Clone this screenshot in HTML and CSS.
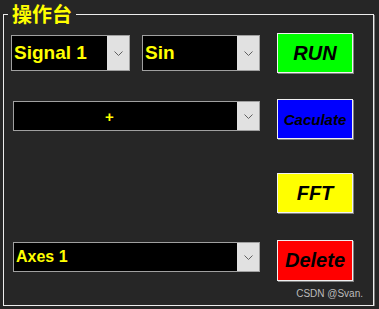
FILE: index.html
```html
<!DOCTYPE html>
<html lang="zh">
<head>
    <meta charset="UTF-8">
    <meta name="viewport" content="width=device-width, initial-scale=1.0">
    <title>操作台</title>
    <link rel="stylesheet" href="styles.css">
</head>
<body>

    <!-- Control panel -->
    <fieldset class="panel">
        <legend class="panel-title">操作台</legend>

        <div class="row row-first">
            <div class="left pair">
                <div class="combo combo-tall signal">
                    <span class="combo-text">Signal 1</span>
                    <span class="combo-arrow"><svg width="9" height="5" viewBox="0 0 9 5"><path d="M0.5 0.5 L4.5 4.5 L8.5 0.5" fill="none" stroke="#606060" stroke-width="1"/></svg></span>
                </div>
                <div class="combo combo-tall wave">
                    <span class="combo-text">Sin</span>
                    <span class="combo-arrow"><svg width="9" height="5" viewBox="0 0 9 5"><path d="M0.5 0.5 L4.5 4.5 L8.5 0.5" fill="none" stroke="#606060" stroke-width="1"/></svg></span>
                </div>
            </div>
            <button class="btn btn-run">RUN</button>
        </div>

        <div class="row row-second">
            <div class="left combo top">
                <span class="combo-text op">+</span>
                <span class="combo-arrow"><svg width="9" height="5" viewBox="0 0 9 5"><path d="M0.5 0.5 L4.5 4.5 L8.5 0.5" fill="none" stroke="#606060" stroke-width="1"/></svg></span>
            </div>
            <button class="btn btn-calc">Caculate</button>
        </div>

        <div class="row row-third">
            <div class="left"></div>
            <button class="btn btn-fft">FFT</button>
        </div>

        <div class="row row-fourth">
            <div class="left combo top">
                <span class="combo-text axes">Axes 1</span>
                <span class="combo-arrow"><svg width="9" height="5" viewBox="0 0 9 5"><path d="M0.5 0.5 L4.5 4.5 L8.5 0.5" fill="none" stroke="#606060" stroke-width="1"/></svg></span>
            </div>
            <button class="btn btn-delete">Delete</button>
        </div>

        <div class="credit">CSDN @Svan.</div>
    </fieldset>

</body>
</html>
```

FILE: styles.css
```css
html {
    background: #262626;
}
body {
    margin: 0;
    padding: 4px 5px 0 3px;
    font-family: "Liberation Sans", Arial, sans-serif;
    background: #262626;
}
.panel {
    box-sizing: border-box;
    height: 302px;
    margin: 0;
    padding: 0;
    border: 1px solid #ececec;
    box-shadow: 1px 1px 0 #7a7a7a;
}
.panel-title {
    margin-left: 4px;
    padding: 0 4px;
    font-family: "Noto Sans CJK SC", sans-serif;
    font-size: 20px;
    line-height: 20px;
    font-weight: 700;
    color: #ffff00;
}
.row {
    display: grid;
    grid-template-columns: 247px 76px;
    column-gap: 17px;
    align-items: center;
    height: 40px;
    padding-left: 9px;
}
.row-first {
    margin-top: 9px;
}
.row-second {
    margin-top: 26px;
}
.row-third {
    margin-top: 34px;
}
.row-fourth {
    margin-top: 27px;
    height: 41px;
}
.pair {
    display: flex;
    gap: 12px;
    margin-left: -2px;
    width: 249px;
}
.combo {
    box-sizing: border-box;
    display: flex;
    height: 30px;
    border: 1px solid #a0a0a0;
    background: #000;
}
.combo.top {
    align-self: start;
    margin-top: 2px;
}
.combo-tall {
    height: 36px;
}
.signal {
    width: 119px;
}
.wave {
    width: 118px;
}
.combo-text {
    flex: 1;
    display: flex;
    align-items: center;
    padding-left: 2px;
    color: #ffff00;
    font-weight: bold;
    font-size: 16px;
    white-space: nowrap;
    overflow: hidden;
}
.combo-tall .combo-text {
    font-size: 19px;
}
.combo-text.op {
    padding-left: 91px;
    font-size: 15px;
}
.combo-arrow {
    width: 22px;
    background: #e1e1e1;
    display: flex;
    align-items: center;
    justify-content: center;
}
.btn {
    box-sizing: border-box;
    width: 76px;
    height: 40px;
    padding: 0;
    border: 1px solid #f0f0f0;
    box-shadow: 1px 1px 0 #808080;
    font-family: "Liberation Sans", Arial, sans-serif;
    font-weight: bold;
    font-style: italic;
    font-size: 20px;
    color: #000;
}
.row-fourth .btn {
    height: 41px;
}
.btn-run {
    background: #00ff00;
}
.btn-calc {
    background: #0000ff;
    font-size: 15px;
}
.btn-fft {
    background: #ffff00;
}
.btn-delete {
    background: #ff0000;
}
.credit {
    text-align: right;
    padding-right: 10px;
    margin-top: 7px;
    font-size: 10px;
    color: #bcbcbc;
}
```
